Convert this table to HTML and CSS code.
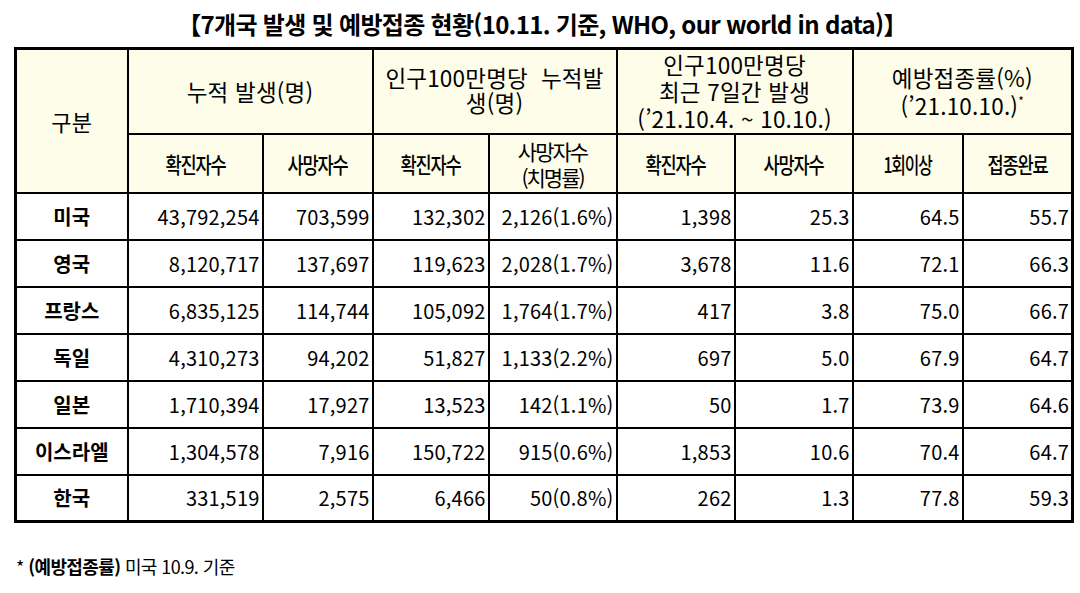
FILE: index.html
```html
<!DOCTYPE html>
<html lang="ko">
<head>
<meta charset="utf-8">
<title>7개국 발생 및 예방접종 현황</title>
<link rel="stylesheet" href="styles.css">
</head>
<body>
<div class="page">
  <h1 class="title">【7개국 발생 및 예방접종 현황(10.11. 기준, WHO, our world in data)】</h1>
  <table class="stats">
    <colgroup>
      <col class="c1"><col class="c2"><col class="c3"><col class="c4"><col class="c5"><col class="c6"><col class="c7"><col class="c8"><col class="c9">
    </colgroup>
    <thead>
      <tr class="hrow1">
        <th rowspan="2" class="lbl">구분</th>
        <th colspan="2">누적 발생(명)</th>
        <th colspan="2" class="duo">인구100만명당&nbsp; 누적발<br>생(명)</th>
        <th colspan="2" class="tri">인구100만명당<br>최근 7일간 발생<br>(’21.10.4. ~ 10.10.)</th>
        <th colspan="2" class="vac">예방접종률(%)<br>(’21.10.10.)<sup>*</sup></th>
      </tr>
      <tr class="hrow2">
        <th><span class="cond">확진자수</span></th>
        <th><span class="cond">사망자수</span></th>
        <th><span class="cond">확진자수</span></th>
        <th><span class="semi">사망자수<br>(치명률)</span></th>
        <th><span class="cond">확진자수</span></th>
        <th><span class="cond">사망자수</span></th>
        <th><span class="cond narrow">1회이상</span></th>
        <th><span class="cond">접종완료</span></th>
      </tr>
    </thead>
    <tbody>
      <tr><th>미국</th><td>43,792,254</td><td>703,599</td><td>132,302</td><td>2,126(1.6%)</td><td>1,398</td><td>25.3</td><td>64.5</td><td>55.7</td></tr>
      <tr><th>영국</th><td>8,120,717</td><td>137,697</td><td>119,623</td><td>2,028(1.7%)</td><td>3,678</td><td>11.6</td><td>72.1</td><td>66.3</td></tr>
      <tr><th>프랑스</th><td>6,835,125</td><td>114,744</td><td>105,092</td><td>1,764(1.7%)</td><td>417</td><td>3.8</td><td>75.0</td><td>66.7</td></tr>
      <tr><th>독일</th><td>4,310,273</td><td>94,202</td><td>51,827</td><td>1,133(2.2%)</td><td>697</td><td>5.0</td><td>67.9</td><td>64.7</td></tr>
      <tr><th>일본</th><td>1,710,394</td><td>17,927</td><td>13,523</td><td>142(1.1%)</td><td>50</td><td>1.7</td><td>73.9</td><td>64.6</td></tr>
      <tr><th>이스라엘</th><td>1,304,578</td><td>7,916</td><td>150,722</td><td>915(0.6%)</td><td>1,853</td><td>10.6</td><td>70.4</td><td>64.7</td></tr>
      <tr><th>한국</th><td>331,519</td><td>2,575</td><td>6,466</td><td>50(0.8%)</td><td>262</td><td>1.3</td><td>77.8</td><td>59.3</td></tr>
    </tbody>
  </table>
  <p class="note">* <span class="note-b">(예방접종률)</span> 미국 10.9. 기준</p>
</div>
</body>
</html>
```
FILE: styles.css
```css
html, body {
  margin: 0;
  padding: 0;
  background: #ffffff;
}
body {
  font-family: "Noto Sans CJK KR", "Noto Sans", sans-serif;
  color: #000;
}
.page {
  width: 1080px;
  height: 593px;
  overflow: hidden;
}
.title {
  margin: 0;
  height: 47px;
  display: flex;
  align-items: center;
  justify-content: center;
  font-size: 24px;
  font-weight: 700;
  letter-spacing: -0.7px;
  padding-left: 4px;
  box-sizing: border-box;
}
.stats {
  margin-left: 14px;
  width: 1060px;
  table-layout: fixed;
  border-collapse: collapse;
  border: 3px solid #000;
}
.stats col.c1 { width: 112px; }
.stats col.c2 { width: 135px; }
.stats col.c3 { width: 110px; }
.stats col.c4 { width: 116px; }
.stats col.c5 { width: 128px; }
.stats col.c6 { width: 118px; }
.stats col.c7 { width: 118px; }
.stats col.c8 { width: 110px; }
.stats col.c9 { width: 110px; }
.stats th, .stats td {
  border: 2px solid #000;
  padding: 0;
}
.stats thead th {
  background: #fdfdea;
  font-weight: 400;
  font-size: 22.5px;
  line-height: 26px;
  text-align: center;
  letter-spacing: 0.2px;
}
.stats thead th.duo {
  line-height: 25px;
  padding-bottom: 2px;
}
.stats thead th.tri {
  line-height: 27px;
}
.stats thead th.vac {
  line-height: 28px;
}
.stats thead th.lbl {
  font-size: 22px;
}
.hrow1 { height: 85px; }
.hrow2 { height: 59px; }
.stats thead sup {
  font-size: 12px;
  vertical-align: 9px;
  line-height: 0;
}
.cond {
  display: inline-block;
  font-size: 22px;
  font-weight: 500;
  letter-spacing: -1.5px;
  transform: scaleX(0.8);
  white-space: nowrap;
}
.cond.narrow {
  transform: scaleX(0.72);
}
.semi {
  display: inline-block;
  font-size: 21px;
  letter-spacing: -2px;
  line-height: 26px;
  padding-top: 1px;
}
.stats tbody tr { height: 47px; }
.stats tbody th {
  font-weight: 700;
  font-size: 20px;
  text-align: center;
}
.stats tbody td {
  text-align: right;
  padding-right: 2px;
  font-size: 20px;
  letter-spacing: 0.2px;
}
.note {
  margin: 30px 0 0 16px;
  font-size: 18px;
  letter-spacing: -0.6px;
}
.note-b {
  font-weight: 700;
}
```
